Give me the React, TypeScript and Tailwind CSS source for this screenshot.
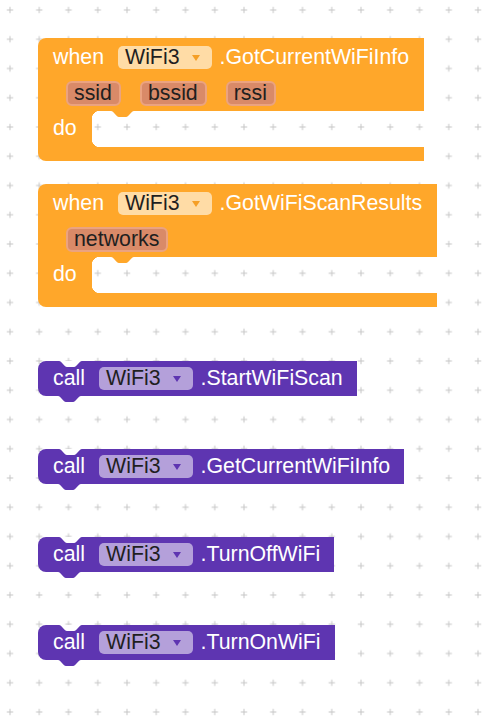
const ORANGE = '#ffa72a';
const PURPLE = '#5e35b1';

// Blockly-style connection tab: sloped sides, flat-ish bottom
function Tab({ fill, className }: { fill: string; className: string }) {
  return (
    <svg width="23" height="6" viewBox="0 0 23 6" className={`absolute ${className}`}>
      <path d="M0 0C3 0 5 6 8 6L15 6C18 6 20 0 23 0Z" fill={fill} />
    </svg>
  );
}

function Dropdown({ tone }: { tone: 'orange' | 'purple' }) {
  const fill = tone === 'orange' ? 'bg-[#ffdca6]' : 'bg-[#b4a0da]';
  const arrow = tone === 'orange' ? '#f59f26' : PURPLE;
  return (
    <div className={`ml-[14px] flex h-[23px] items-center rounded-[5px] pl-[7px] pr-[12px] ${fill}`}>
      <span className="text-[#1f1f1f]">WiFi3</span>
      <svg width="8" height="6" viewBox="0 0 8 6" className="ml-[12px]">
        <path d="M0 0H8L4 6Z" fill={arrow} />
      </svg>
    </div>
  );
}

function Param({ name }: { name: string }) {
  return (
    <div className="flex h-[25px] items-center rounded-[6px] border-2 border-[#eba380] bg-[#d98a68] pl-[6px] pr-[7px] text-[#1f1f1f]">
      {name}
    </div>
  );
}

function EventBlock({ method, params, className = '' }: { method: string; params: string[]; className?: string }) {
  return (
    <div className={`flex w-fit flex-col ${className}`}>
      <div className="flex flex-col gap-[12px] rounded-tl-[8px] bg-[#ffa72a] pb-[5px] pl-[15px] pr-[15px] pt-[8px]">
        <div className="flex h-[23px] items-center">
          <span className="text-white">when</span>
          <Dropdown tone="orange" />
          <span className="ml-[8px] text-white">{method}</span>
        </div>
        <div className="flex gap-[19px] pl-[13px]">
          {params.map((p) => (
            <Param key={p} name={p} />
          ))}
        </div>
      </div>

      {/* statement input */}
      <div className="flex h-[36px]">
        <div className="flex w-[54px] items-center bg-[#ffa72a] pl-[15px] text-white">do</div>
        <div className="relative flex-1">
          <div className="absolute left-0 top-0 h-[8px] w-[8px] bg-[radial-gradient(circle_at_100%_100%,transparent_8px,#ffa72a_8.5px)]" />
          <div className="absolute bottom-0 left-0 h-[8px] w-[8px] bg-[radial-gradient(circle_at_100%_0%,transparent_8px,#ffa72a_8.5px)]" />
          <Tab fill={ORANGE} className="left-[19px] top-0" />
        </div>
      </div>

      <div className="h-[14px] rounded-bl-[8px] bg-[#ffa72a]" />
    </div>
  );
}

function CallBlock({ method, className = '' }: { method: string; className?: string }) {
  return (
    <div className={`relative flex h-[35px] w-fit items-center rounded-l-[8px] bg-[#5e35b1] pl-[15px] pr-[14px] ${className}`}>
      <Tab fill="#ffffff" className="left-[21px] top-0" />
      <span className="text-white">call</span>
      <Dropdown tone="purple" />
      <span className="ml-[8px] text-white">{method}</span>
      <Tab fill={PURPLE} className="left-[20px] top-full" />
    </div>
  );
}

function Grid() {
  return (
    <svg className="absolute inset-0" width="491" height="720">
      <defs>
        <pattern id="plus" x="-4.625" y="-4.625" width="29.25" height="29.25" patternUnits="userSpaceOnUse">
          <path d="M11.4 14.625H17.85M14.625 11.4V17.85" stroke="#c6c6c6" strokeWidth="1" />
        </pattern>
      </defs>
      <rect width="491" height="720" fill="url(#plus)" />
    </svg>
  );
}

export default function App() {
  return (
    <div className="relative h-[720px] w-[491px] overflow-hidden bg-white font-['Liberation_Sans',Arial,sans-serif] text-[21.33px] leading-none">
      <Grid />
      <div className="relative flex flex-col pl-[38px] pt-[38px]">
        <EventBlock method=".GotCurrentWiFiInfo" params={['ssid', 'bssid', 'rssi']} />
        <EventBlock method=".GotWiFiScanResults" params={['networks']} className="mt-[23px]" />
        <CallBlock method=".StartWiFiScan" className="mt-[54px]" />
        <CallBlock method=".GetCurrentWiFiInfo" className="mt-[53px]" />
        <CallBlock method=".TurnOffWiFi" className="mt-[53px]" />
        <CallBlock method=".TurnOnWiFi" className="mt-[53px]" />
      </div>
    </div>
  );
}
